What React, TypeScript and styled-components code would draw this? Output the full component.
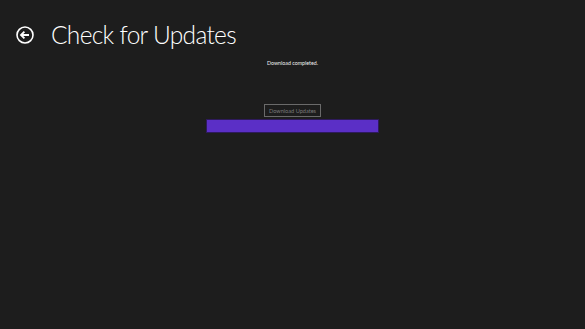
import React from 'react';
import styled, { createGlobalStyle } from 'styled-components';

const Global = createGlobalStyle`
  html, body {
    margin: 0;
    padding: 0;
    background: #1d1d1d;
    height: 100%;
  }
  #root {
    min-height: 100vh;
  }
`;

const Page = styled.div`
  min-height: 329px;
  background: #1d1d1d;
  color: #ffffff;
  font-family: Lato, 'Open Sans', 'Noto Sans', sans-serif;
`;

const Header = styled.header`
  display: flex;
  align-items: center;
  gap: 17px;
  padding: 17px 0 0 16px;
  height: 36px;
`;

const BackButton = styled.button`
  width: 18px;
  height: 18px;
  padding: 0;
  border: none;
  background: transparent;
  display: flex;
  align-items: center;
  justify-content: center;
  cursor: pointer;
`;

const Title = styled.h1`
  margin: 0;
  font-size: 24.5px;
  font-weight: 300;
  letter-spacing: -0.7px;
  color: #ffffff;
  line-height: 36px;
`;

const Content = styled.main`
  display: flex;
  flex-direction: column;
  align-items: center;
  padding-top: 5px;
`;

const Status = styled.p`
  margin: 0;
  font-size: 5.3px;
  line-height: 10px;
  color: #f0f0f0;
`;

const ActionButton = styled.button`
  margin-top: 36px;
  width: 57px;
  height: 13px;
  padding: 0;
  background: transparent;
  border: 1px solid #6a6a6a;
  color: #7a7a7a;
  font-family: inherit;
  font-size: 5.6px;
  line-height: 10px;
`;

const Progress = styled.div`
  margin-top: 2px;
  width: 171px;
  height: 12px;
  background: #5b2fc6;
  border: 1px solid #2e1a5c;
`;

function BackIcon() {
  return (
    <svg width="18" height="18" viewBox="0 0 18 18">
      <circle cx="9" cy="9" r="8" fill="none" stroke="#fff" strokeWidth="1.6" />
      <path d="M13 9H5.2M8.4 5.6L5 9l3.4 3.4" fill="none" stroke="#fff" strokeWidth="1.8" />
    </svg>
  );
}

export default function App() {
  return (
    <>
      <Global />
      <Page>
        <Header>
          <BackButton aria-label="Back">
            <BackIcon />
          </BackButton>
          <Title>Check for Updates</Title>
        </Header>
        <Content>
          <Status>Download completed.</Status>
          <ActionButton disabled>Download Updates</ActionButton>
          <Progress />
        </Content>
      </Page>
    </>
  );
}
